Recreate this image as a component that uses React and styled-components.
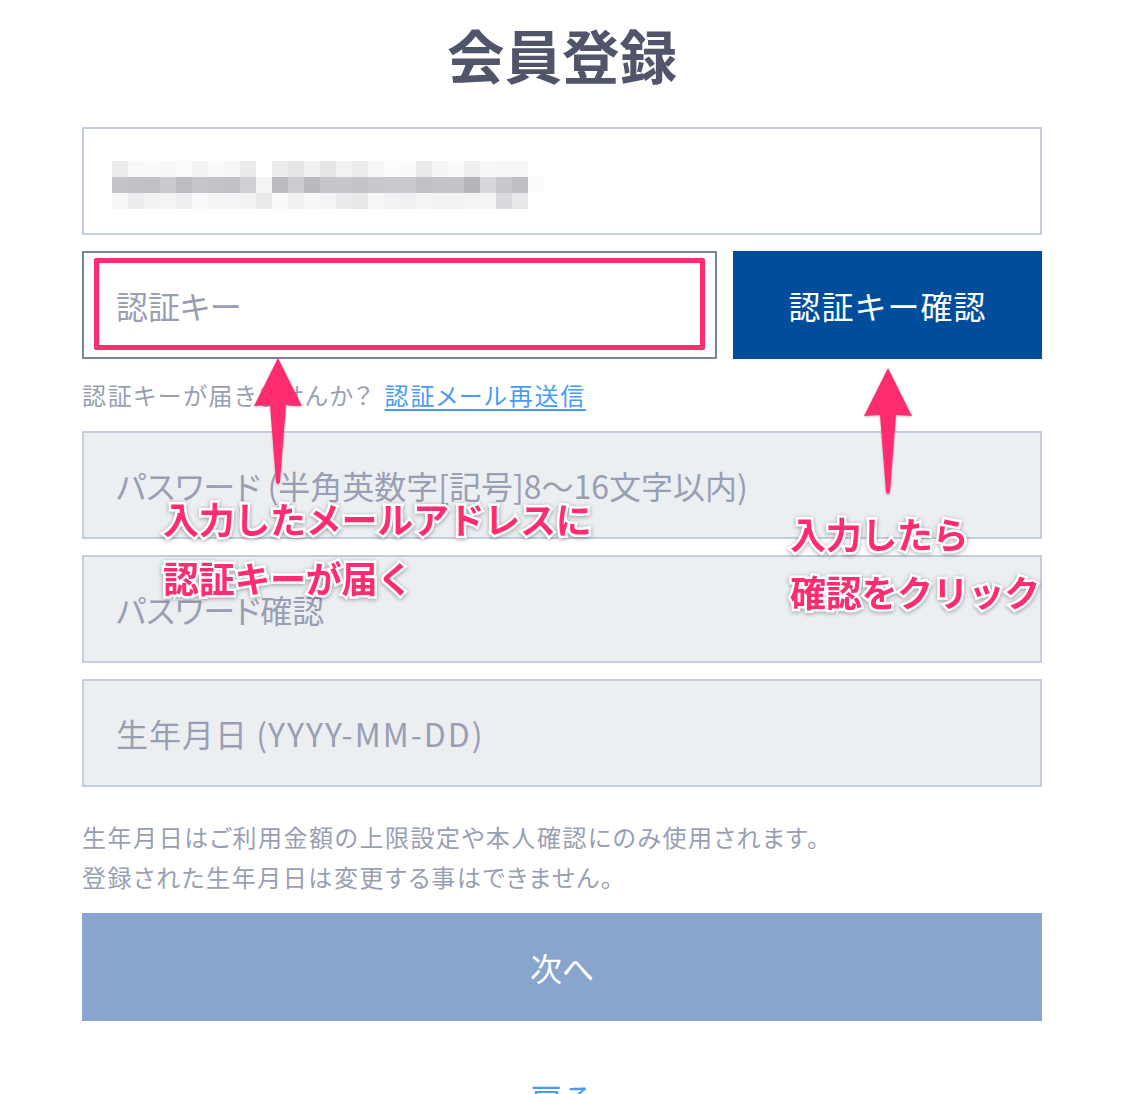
import styled, { createGlobalStyle } from "styled-components";

const blurRows = [
  ["#ecedef", "#f9f9fa", "#fafafa", "#f8f8f8", "#fbfbfb", "#f3f3f4", "#fafafa", "#f6f6f6", "#ebebed", "#ffffff", "#ecedee", "#e5e6e8", "#f1f1f1", "#e4e5e7", "#f2f2f4", "#ebecee", "#f7f7f7", "#fcfcfc", "#f9fafa", "#e9eaec", "#f5f5f5", "#fafafa", "#edeef0", "#f8f8f8", "#f6f6f6", "#f6f6f6", "#ffffff"],
  ["#c3c5ca", "#bfc1c6", "#bfc1c5", "#c8cacf", "#bcbdc2", "#c5c6cb", "#c3c4ca", "#bfc1c5", "#cfd0d4", "#f4f4f4", "#b9bbc0", "#cbccd1", "#b8babf", "#c6c7cc", "#c6c7cc", "#c3c4c9", "#c8c9cd", "#c9cacf", "#c9cacf", "#c1c2c7", "#c3c4c9", "#c4c5ca", "#b5b6ba", "#d7d7dd", "#c7c8ce", "#bfc0c6", "#fbfbfb"],
  ["#f6f6f6", "#ecedef", "#f3f3f3", "#f4f4f4", "#eeeef0", "#f9fafb", "#f4f4f4", "#f3f4f5", "#f3f3f4", "#e9eaec", "#fafafa", "#f1f1f1", "#f8f8f8", "#f4f5f7", "#ebebed", "#e9e9ea", "#f6f6f6", "#f1f2f3", "#eff0f1", "#f5f5f6", "#f2f2f3", "#f2f2f3", "#f5f5f5", "#f4f4f5", "#d9dadf", "#e8e8ea", "#ffffff"],
];

const App = () => {
  return (
    <>
      <GlobalStyle />
      <Page>
        <Title>会員登録</Title>
        <Form>
          <Field>
            <BlurredEmail aria-hidden="true">
              {blurRows.flat().map((color, i) => (
                <BlurCell key={i} $color={color} />
              ))}
            </BlurredEmail>
          </Field>
          <KeyRow>
            <KeyInput>
              <Placeholder>認証キー</Placeholder>
              <Highlight />
            </KeyInput>
            <ConfirmButton>認証キー確認</ConfirmButton>
          </KeyRow>
          <Hint>
            <span>認証キーが届きませんか？</span>
            <ResendLink href="#">認証メール再送信</ResendLink>
          </Hint>
          <Field $disabled>
            <Placeholder>パスワード (半角英数字[記号]8〜16文字以内)</Placeholder>
          </Field>
          <Field $disabled>
            <Placeholder>パスワード確認</Placeholder>
          </Field>
          <Field $disabled>
            <Placeholder $spacing={1}>
              生年月日 (<DateFormat>YYYY-MM-DD</DateFormat>)
            </Placeholder>
          </Field>
          <Note>
            生年月日はご利用金額の上限設定や本人確認にのみ使用されます。
            <br />
            登録された生年月日は変更する事はできません。
          </Note>
          <NextButton>次へ</NextButton>
          <BackLink>戻る</BackLink>

          <Arrow $left={171} $top={231} />
          <Arrow $left={781} $top={241} />
          <Callout $left={81} $top={362}>
            入力したメールアドレスに
            <br />
            認証キーが届く
          </Callout>
          <Callout $left={708} $top={377} $gap={58}>
            入力したら
            <br />
            確認をクリック
          </Callout>
        </Form>
      </Page>
    </>
  );
};

const Arrow = ({ $left, $top }) => (
  <ArrowSvg $left={$left} $top={$top} width="50" height="128" viewBox="0 0 50 128">
    <path
      d="M25 0 L49 48 L33 47 L27 124 Q25 128 23 124 L17 47 L1 48 Z"
      fill="#ff2d6f"
    />
  </ArrowSvg>
);

export default App;

const GlobalStyle = createGlobalStyle`
  html, body {
    margin: 0;
    height: 1094px;
    overflow: hidden;
    background: #fff;
  }
  body {
    font-family: "Noto Sans CJK JP", "Noto Sans", sans-serif;
  }
`;

const Page = styled.div`
  width: 1138px;
  height: 1094px;
  overflow: hidden;
  padding: 0 96px 0 82px;
  box-sizing: border-box;
`;

const Title = styled.h1`
  margin: 0;
  height: 127px;
  padding-top: 12px;
  box-sizing: border-box;
  font-size: 57.5px;
  line-height: 84px;
  font-weight: 700;
  text-align: center;
  color: #50556a;
`;

const Form = styled.div`
  position: relative;
  display: flex;
  flex-direction: column;
  gap: 16px;
`;

const Field = styled.div`
  height: 108px;
  box-sizing: border-box;
  border: 2px solid #c3cddb;
  background: ${(p) => (p.$disabled ? "#ebeff2" : "#fff")};
  display: flex;
  align-items: center;
  padding: 0 32px;
  position: relative;
`;

const BlurredEmail = styled.div`
  position: absolute;
  left: 28px;
  top: 32px;
  display: grid;
  grid-template-columns: repeat(27, 16px);
  grid-auto-rows: 16px;
`;

const BlurCell = styled.div`
  background: ${(p) => p.$color};
`;

const KeyRow = styled.div`
  display: flex;
  gap: 16px;
`;

const KeyInput = styled.div`
  position: relative;
  width: 635px;
  height: 108px;
  box-sizing: border-box;
  border: 2px solid #7a849f;
  display: flex;
  align-items: center;
  padding: 0 32px;
`;

const Highlight = styled.div`
  position: absolute;
  left: 10px;
  top: 5px;
  width: 611px;
  height: 92px;
  box-sizing: border-box;
  border: 5px solid #ff2d6f;
  border-radius: 2px;
`;

const Placeholder = styled.span`
  font-size: 32px;
  line-height: 40px;
  letter-spacing: ${(p) => p.$spacing || 0}px;
  font-feature-settings: "palt";
  color: #999fb3;
  white-space: nowrap;
`;

const DateFormat = styled.span`
  letter-spacing: 2px;
`;

const ConfirmButton = styled.button`
  flex: 1;
  height: 108px;
  border: 0;
  padding: 0;
  background: #004e9b;
  color: #fff;
  font-family: inherit;
  font-size: 32px;
  letter-spacing: 1px;
`;

const Hint = styled.div`
  display: flex;
  gap: 11px;
  margin: -5px 0 -3px;
  height: 48px;
  align-items: center;
  font-size: 24px;
  letter-spacing: 1.8px;
  font-feature-settings: "palt";
  color: #999fb3;
  white-space: nowrap;
`;

const ResendLink = styled.a`
  color: #4a9bf5;
  text-decoration: underline;
  text-underline-offset: 4px;
`;

const Note = styled.p`
  margin: 14px 0 0;
  height: 81px;
  font-size: 24px;
  line-height: 40px;
  letter-spacing: 1.56px;
  font-feature-settings: "palt";
  color: #999fb3;
  white-space: nowrap;
`;

const NextButton = styled.button`
  height: 108px;
  margin-top: -1px;
  border: 0;
  background: #88a5cd;
  color: #fff;
  font-family: inherit;
  font-size: 32px;
`;

const BackLink = styled.div`
  margin-top: 39px;
  font-size: 32px;
  line-height: 44px;
  text-align: center;
  color: #4a9bf5;
`;

const ArrowSvg = styled.svg`
  position: absolute;
  left: ${(p) => p.$left}px;
  top: ${(p) => p.$top}px;
  filter: drop-shadow(0 1px 1px rgba(0, 0, 0, 0.25));
`;

const Callout = styled.div`
  position: absolute;
  left: ${(p) => p.$left}px;
  top: ${(p) => p.$top}px;
  font-size: 36px;
  font-weight: 700;
  letter-spacing: -0.3px;
  line-height: ${(p) => p.$gap || 59}px;
  color: #ff2d6f;
  white-space: nowrap;
  -webkit-text-stroke: 5px #fff;
  paint-order: stroke fill;
  filter: drop-shadow(0 1px 2px rgba(0, 0, 0, 0.35));
`;
